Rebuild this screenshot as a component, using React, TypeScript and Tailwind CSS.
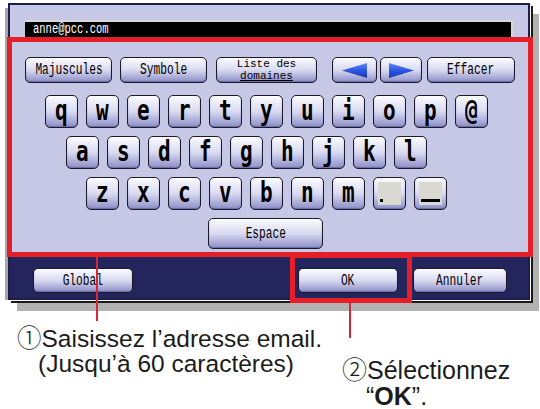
import type { ReactNode } from "react";

const keyBase =
  "flex items-center justify-center rounded-[5px] border-[1.5px] border-[#1b1b2c] bg-linear-to-b from-[#fbfbff] via-[#d9daf0] to-[#8d8fc7] shadow-[inset_0_1px_0_#ffffff,inset_0_-1px_1px_#6a6ca6]";

const mono = { fontFamily: '"Liberation Mono", "DejaVu Sans Mono", monospace' };

function Label({ children }: { children: ReactNode }) {
  return (
    <span className="inline-block scale-x-70 whitespace-nowrap text-[16px] leading-none text-black" style={mono}>
      {children}
    </span>
  );
}

function FnKey({ className, children }: { className: string; children: ReactNode }) {
  return <div className={keyBase + " h-[26px] " + className}>{children}</div>;
}

function LetterKey({ ch }: { ch: string }) {
  return (
    <div className={keyBase + " h-[33px] w-[33px]"}>
      <span
        className="inline-block scale-x-75 pb-[2px] text-[28px] font-bold leading-none text-black"
        style={{ fontFamily: '"DejaVu Sans Mono", monospace' }}
      >
        {ch}
      </span>
    </div>
  );
}

function GlyphKey({ kind }: { kind: "dot" | "under" }) {
  return (
    <div className={keyBase + " h-[33px] w-[33px]"}>
      <div className="relative h-[23px] w-[23px] bg-[#d9d9d2]">
        {kind === "dot" ? (
          <div className="absolute bottom-[3px] left-[2px] h-[3px] w-[3px] bg-black" />
        ) : (
          <div className="absolute bottom-[3px] left-[2px] h-[3px] w-[19px] bg-black" />
        )}
      </div>
    </div>
  );
}

function Arrow({ dir }: { dir: "left" | "right" }) {
  return (
    <svg width="27" height="17" viewBox="0 0 27 17">
      <defs>
        <linearGradient id={"ag" + dir} x1="0" y1="0" x2="0" y2="1">
          <stop offset="0" stopColor="#5f86ff" />
          <stop offset="0.5" stopColor="#2c55e0" />
          <stop offset="1" stopColor="#1a36b0" />
        </linearGradient>
      </defs>
      {dir === "left" ? (
        <polygon points="1,8.5 26,1 26,16" fill={"url(#ag" + dir + ")"} />
      ) : (
        <polygon points="26,8.5 1,1 1,16" fill={"url(#ag" + dir + ")"} />
      )}
    </svg>
  );
}

const row1 = ["q", "w", "e", "r", "t", "y", "u", "i", "o", "p", "@"];
const row2 = ["a", "s", "d", "f", "g", "h", "j", "k", "l"];
const row3 = ["z", "x", "c", "v", "b", "n", "m"];

const circled = { fontFamily: '"Noto Sans CJK JP", sans-serif' };

export default function App() {
  return (
    <div
      className="relative h-[409px] w-[540px] overflow-hidden bg-white"
      style={{ fontFamily: '"Liberation Sans", Arial, sans-serif' }}
    >
      <div className="absolute left-[5px] top-[8px] h-[292px] w-[3px] bg-[#a8a8a8]" />

      <div className="ml-[8px] mt-[3px] w-[522px] border-2 border-[#1d1d50] shadow-[1px_1px_0_0_#ffffff,3px_3px_0_0_#1a1a1a,9px_11px_0_0_#b2b2b2]">
        <div className="bg-[#c7c8e6] pb-[7px] pt-[15px]">
          <div className="ml-[15px] flex h-[18px] w-[488px] items-center bg-black pl-[8px] shadow-[inset_-2px_2px_0_#d8d8d8]">
            <span
              className="inline-block origin-left scale-x-75 whitespace-nowrap text-[14px] leading-none text-white"
              style={mono}
            >
              anne@pcc.com
            </span>
          </div>

          <div className="ml-[15px] mt-[19px] flex">
            <FnKey className="w-[87px]">
              <Label>Majuscules</Label>
            </FnKey>
            <FnKey className="ml-[8px] w-[87px]">
              <Label>Symbole</Label>
            </FnKey>
            <FnKey className="ml-[9px] w-[101px] flex-col">
              <span className="whitespace-nowrap text-[11px] leading-[12px] text-black" style={mono}>
                Liste des
              </span>
              <span className="whitespace-nowrap text-[11px] leading-[12px] text-black underline" style={mono}>
                domaines
              </span>
            </FnKey>
            <FnKey className="ml-[15px] w-[45px]">
              <Arrow dir="left" />
            </FnKey>
            <FnKey className="ml-[3px] w-[42px]">
              <Arrow dir="right" />
            </FnKey>
            <FnKey className="ml-[5px] w-[88px]">
              <Label>Effacer</Label>
            </FnKey>
          </div>

          <div className="ml-[35px] mt-[12px] flex gap-[8px]">
            {row1.map((c) => (
              <LetterKey key={c} ch={c} />
            ))}
          </div>
          <div className="ml-[56px] mt-[8px] flex gap-[8px]">
            {row2.map((c) => (
              <LetterKey key={c} ch={c} />
            ))}
          </div>
          <div className="ml-[76px] mt-[8px] flex gap-[8px]">
            {row3.map((c) => (
              <LetterKey key={c} ch={c} />
            ))}
            <GlyphKey kind="dot" />
            <GlyphKey kind="under" />
          </div>
          <div className="ml-[198px] mt-[8px] flex">
            <div className={keyBase + " h-[31px] w-[115px]"}>
              <Label>Espace</Label>
            </div>
          </div>
        </div>

        <div className="flex bg-[#25255e] pb-[5px] pt-[12px]">
          <div className={keyBase + " ml-[23px] h-[25px] w-[100px]"}>
            <Label>Global</Label>
          </div>
          <div className={keyBase + " ml-[165px] h-[25px] w-[100px]"}>
            <Label>OK</Label>
          </div>
          <div className={keyBase + " ml-[15px] h-[25px] w-[94px]"}>
            <Label>Annuler</Label>
          </div>
        </div>
      </div>

      <div className="flex text-[#1c1c1c]">
        <div className="ml-[17px] mt-[24px] w-[325px] text-[24.5px] leading-[25px]">
          <div className="whitespace-nowrap">
            <span style={circled} className="font-light">
              ①
            </span>
            Saisissez l’adresse email.
          </div>
          <div className="whitespace-nowrap pl-[21px]">(Jusqu’à 60 caractères)</div>
        </div>
        <div className="mt-[55px] text-[25px] leading-[26px]">
          <div className="whitespace-nowrap">
            <span style={circled} className="font-light">
              ②
            </span>
            Sélectionnez
          </div>
          <div className="whitespace-nowrap pl-[24px]">
            “<b>OK</b>”.
          </div>
        </div>
      </div>

      {/* annotation overlay */}
      <div className="absolute left-[7px] top-[37px] h-[220px] w-[526px] border-[5px] border-[#e51f27]" />
      <div className="absolute left-[290px] top-[253px] h-[50px] w-[122px] border-[5px] border-[#e51f27]" />
      <div className="absolute left-[96px] top-[257px] h-[64px] w-[2px] bg-[#d4283a]" />
      <div className="absolute left-[349px] top-[303px] h-[35px] w-[2px] bg-[#d4283a]" />
    </div>
  );
}
